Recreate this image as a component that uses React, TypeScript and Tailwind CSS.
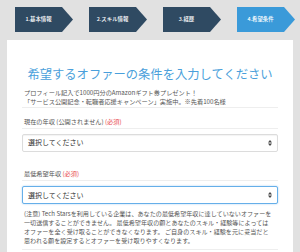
import React from "react";

const steps = [
  { label: "1.基本情報", active: false },
  { label: "2.スキル情報", active: false },
  { label: "3.経歴", active: false },
  { label: "4.希望条件", active: true },
];

function SelectBox({ focused }: { focused?: boolean }) {
  return (
    <div
      className={
        "flex h-[18px] items-center justify-between rounded-[2px] bg-white pl-[5px] pr-[5px] text-[7px] text-[#333] " +
        (focused
          ? "border border-[#66afe9] shadow-[0_0_2px_rgba(102,175,233,0.6)]"
          : "border border-[#dcdcdc] shadow-[inset_0_1px_1px_rgba(0,0,0,0.05)]")
      }
    >
      <span>選択してください</span>
      <svg width="4" height="6" viewBox="0 0 4 6">
        <polygon points="0,2.4 2,0 4,2.4" fill="#444" />
        <polygon points="0,3.6 2,6 4,3.6" fill="#444" />
      </svg>
    </div>
  );
}

export default function App() {
  return (
    <div
      className="h-[252px] w-[300px] overflow-hidden bg-[#e1e1e1]"
      style={{ fontFamily: '"Noto Sans CJK JP", "Noto Sans", sans-serif' }}
    >
      <div className="flex gap-[16px] pl-[15px] pt-[7px]">
        {steps.map((s) => (
          <div
            key={s.label}
            className={
              "flex h-[25px] w-[58px] items-center [clip-path:polygon(0_0,47px_0,58px_50%,47px_100%,0_100%)] " +
              (s.active ? "bg-[#3a9ad9]" : "bg-[#2f4a62]")
            }
          >
            <span className="w-[47px] text-center text-[5.4px] font-medium leading-none text-white">
              {s.label}
            </span>
          </div>
        ))}
      </div>

      <div className="mx-[7px] mt-[8px] h-[300px] bg-white px-[15px] pt-[26px]">
        <h1 className="whitespace-nowrap text-center text-[12.3px] leading-[16px] text-[#4a9fdb]">
          希望するオファーの条件を入力してください
        </h1>
        <div className="mt-[5.5px] border-b border-[#eeeeee] pb-[1.5px] pl-[2px] text-[6.2px] leading-[9px] text-[#555] whitespace-nowrap">
          プロフィール記入で1000円分のAmazonギフト券プレゼント！
          <br />
          「サービス公開記念・転職者応援キャンペーン」実施中。※先着100名様
        </div>

        <div className="mt-[8.5px] border-b border-[#eeeeee] pb-[2.5px] pl-[2px] text-[6.2px] leading-[9px] text-[#555] whitespace-nowrap">
          現在の年収 (公開されません) <span className="text-[#e8464b]">(必須)</span>
        </div>
        <div className="mt-[4.5px]">
          <SelectBox />
        </div>

        <div className="mt-[17.5px] border-b border-[#eeeeee] pb-[1.5px] pl-[2px] text-[6.2px] leading-[9px] text-[#555] whitespace-nowrap">
          最低希望年収 <span className="text-[#e8464b]">(必須)</span>
        </div>
        <div className="mt-[5.5px]">
          <SelectBox focused />
        </div>

        <div className="mt-[4.5px] border-b border-[#eeeeee] pb-[4px] pl-[2px] text-[6.1px] leading-[9px] text-[#555] whitespace-nowrap">
          (注意) Tech Starsを利用している企業は、あなたの最低希望年収に達していないオファーを
          <br />
          一切送信することができません。 最低希望年収の額とあなたのスキル・経験等によっては
          <br />
          オファーを全く受け取ることができなくなります。 ご自身のスキル・経験を元に妥当だと
          <br />
          思われる額を設定するとオファーを受け取りやすくなります。
        </div>
      </div>
    </div>
  );
}
